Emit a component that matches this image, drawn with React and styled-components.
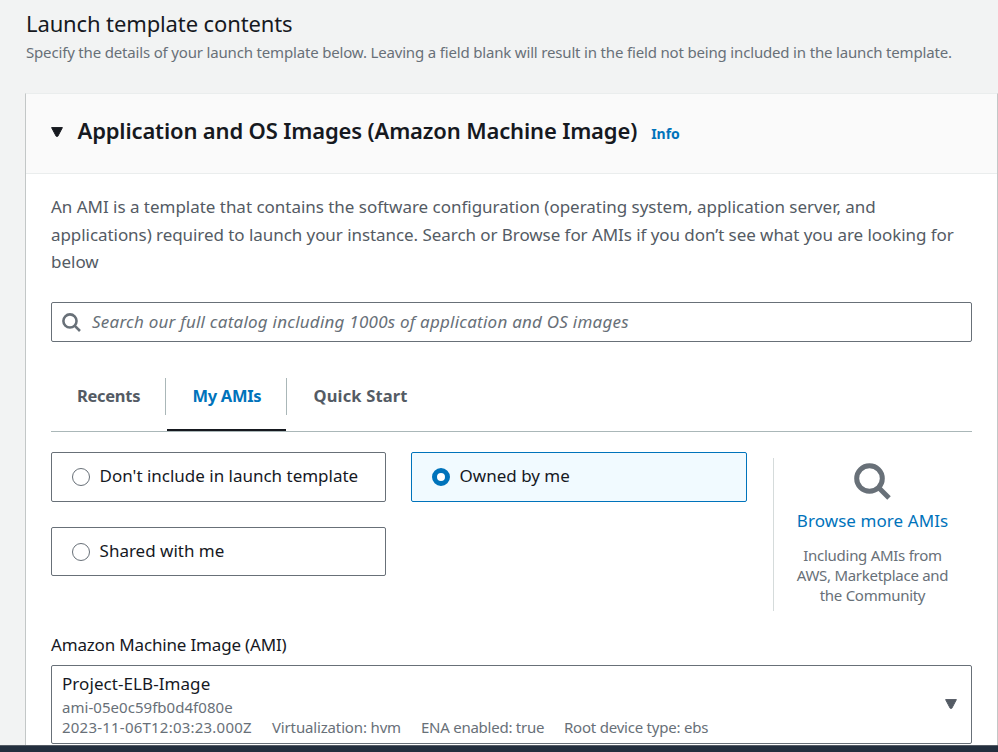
import React from "react";
import styled, { createGlobalStyle } from "styled-components";

const GlobalStyle = createGlobalStyle`
  * { box-sizing: border-box; }
  body {
    margin: 0;
    overflow: hidden;
    background: #f2f3f3;
    color: #16191f;
    font-family: "Noto Sans", "Open Sans", sans-serif;
  }
`;

const Page = styled.div`
  display: flex;
  flex-direction: column;
  width: 998px;
  height: 752px;
  overflow: hidden;
`;

const PageHeader = styled.header`
  height: 93px;
  flex: none;
  padding: 8px 26px 0;
`;

const Title = styled.h1`
  margin: 0;
  font-size: 22px;
  font-weight: 400;
  line-height: 30px;
  letter-spacing: -0.12px;
  white-space: nowrap;
`;

const Subtitle = styled.p`
  margin: 4px 0 0;
  font-size: 15px;
  line-height: 20px;
  letter-spacing: -0.17px;
  color: #687078;
  white-space: nowrap;
`;

const Card = styled.section`
  flex: 1;
  margin-left: 25px;
  background: #fff;
  border-top: 1px solid #eaeded;
  border-left: 1px solid #c3c7c7;
  border-right: 1px solid #c3c7c7;
`;

const CardHeader = styled.div`
  display: flex;
  align-items: baseline;
  height: 80px;
  padding: 21px 25px 0;
  background: #fafafa;
  border-bottom: 1px solid #eaeded;
`;

const CardTitle = styled.h2`
  margin: 0 0 0 14.5px;
  font-size: 22px;
  font-weight: 600;
  line-height: 30px;
  letter-spacing: -0.155px;
  white-space: nowrap;
`;

const InfoLink = styled.a`
  margin-left: 14px;
  font-size: 14px;
  font-weight: 700;
  color: #0073bb;
`;

const CardBody = styled.div`
  padding: 19px 25px 0;
`;

const Description = styled.p`
  margin: 0;
  color: #545b64;
  font-size: 17px;
  line-height: 27.5px;
  white-space: nowrap;
`;

const Line = styled.span`
  display: block;
  letter-spacing: ${(p) => p.$spacing}px;
`;

const SearchBox = styled.div`
  display: flex;
  align-items: center;
  height: 40px;
  margin-top: 26.5px;
  padding-left: 10px;
  border: 1px solid #687078;
  border-radius: 2px;
`;

const Placeholder = styled.span`
  margin: -1px 0 0 11px;
  font-size: 17px;
  font-style: italic;
  line-height: 24px;
  letter-spacing: 0.23px;
  color: #687078;
  white-space: nowrap;
`;

const Tabs = styled.nav`
  display: flex;
  height: 54px;
  margin-top: 36px;
  border-bottom: 1px solid #aab7b8;
`;

const Tab = styled.div`
  display: flex;
  flex-direction: column;
  justify-content: space-between;
  width: ${(p) => p.$width}px;
  color: ${(p) => (p.$active ? "#0073bb" : "#545b64")};

  &::after {
    content: "";
    height: 2px;
    margin: 0 1px;
    background: ${(p) => (p.$active ? "#16191f" : "transparent")};
  }
`;

const TabLabel = styled.span`
  height: 37px;
  padding-left: ${(p) => p.$inset}px;
  border-right: 1px solid ${(p) => (p.$last ? "transparent" : "#aab7b8")};
  font-size: 16.5px;
  font-weight: 700;
  line-height: 35px;
  letter-spacing: ${(p) => p.$spacing}px;
  white-space: nowrap;
`;

const Choices = styled.div`
  display: flex;
  margin-top: 20px;
`;

const Options = styled.div`
  display: grid;
  grid-template-columns: 335px 336px;
  grid-template-rows: 50px 49px;
  gap: 25px;
`;

const Option = styled.label`
  display: flex;
  align-items: center;
  padding-left: 20px;
  background: ${(p) => (p.$checked ? "#f1faff" : "#fff")};
  border: 1px solid ${(p) => (p.$checked ? "#0073bb" : "#687078")};
  border-radius: 2px;
`;

const Radio = styled.span`
  width: 18px;
  height: 18px;
  flex: none;
  border: ${(p) => (p.$checked ? "5px solid #0073bb" : "1.5px solid #687078")};
  border-radius: 50%;
  background: #fff;
`;

const OptionText = styled.span`
  margin: -2px 0 0 9.6px;
  font-size: 17px;
  line-height: 24px;
  letter-spacing: -0.01px;
  white-space: nowrap;
`;

const Browse = styled.aside`
  display: flex;
  flex-direction: column;
  align-items: center;
  width: 198px;
  height: 153px;
  margin: 6px 0 0 26px;
  padding-top: 5px;
  border-left: 1px solid #d5dbdb;
`;

const BrowseLink = styled.a`
  margin-top: 9px;
  font-size: 17px;
  line-height: 24px;
  letter-spacing: 0.07px;
  color: #0073bb;
  white-space: nowrap;
`;

const BrowseNote = styled.p`
  margin: 12px 0 0;
  font-size: 15px;
  line-height: 20px;
  letter-spacing: -0.28px;
  text-align: center;
  color: #687078;
  white-space: nowrap;
`;

const FieldLabel = styled.div`
  margin-top: 22px;
  font-size: 17px;
  line-height: 24px;
  letter-spacing: -0.17px;
`;

const Select = styled.div`
  display: flex;
  align-items: center;
  justify-content: space-between;
  height: 79px;
  margin-top: 8px;
  padding: 0 14px 0 10px;
  border: 1px solid #687078;
  border-radius: 2px;
`;

const SelectName = styled.div`
  padding-bottom: 1px;
  font-size: 17px;
  line-height: 24px;
  letter-spacing: 0.07px;
`;

const SelectMeta = styled.div`
  display: flex;
  font-size: 15px;
  line-height: 20px;
  color: #687078;
  white-space: nowrap;
`;

const MetaItem = styled.span`
  width: ${(p) => p.$width}px;
  letter-spacing: ${(p) => p.$spacing}px;
`;

const FooterBar = styled.footer`
  height: 7px;
  flex: none;
  background: #232f3e;
  border-top: 1px solid #545b64;
`;

const Icon = styled.svg`
  flex: none;
  align-self: ${(p) => p.$align || "center"};
  margin-top: ${(p) => p.$top || 0}px;
`;

const SearchIcon = ({ size, stroke }) => (
  <Icon width={size} height={size} viewBox="0 0 37 37" fill="none" stroke="#687078" strokeWidth={stroke}>
    <circle cx="15.5" cy="15.5" r="12.8" />
    <path d="M24.5 24.5L35 35" />
  </Icon>
);

const Caret = ({ color, align, top }) => (
  <Icon width="12" height="10" viewBox="0 0 12 10" $align={align} $top={top}>
    <path d="M.6 .6H11.4L6.8 9.3H5.2Z" fill={color} stroke={color} strokeLinejoin="round" />
  </Icon>
);

const tabs = [
  { label: "Recents", width: 115, inset: 26, spacing: -0.3 },
  { label: "My AMIs", width: 121, inset: 26.5, spacing: -0.3, active: true },
  { label: "Quick Start", width: 150, inset: 26.5, spacing: 0.16, last: true },
];

const options = [
  { label: "Don't include in launch template" },
  { label: "Owned by me", checked: true },
  { label: "Shared with me" },
];

export default function App() {
  return (
    <Page>
      <GlobalStyle />
      <PageHeader>
        <Title>Launch template contents</Title>
        <Subtitle>
          Specify the details of your launch template below. Leaving a field blank will result in the field not being
          included in the launch template.
        </Subtitle>
      </PageHeader>
      <Card>
        <CardHeader>
          <Caret color="#16191f" align="flex-start" top={12} />
          <CardTitle>Application and OS Images (Amazon Machine Image)</CardTitle>
          <InfoLink>Info</InfoLink>
        </CardHeader>
        <CardBody>
          <Description>
            <Line $spacing={-0.025}>
              An AMI is a template that contains the software configuration (operating system, application server, and
            </Line>
            <Line $spacing={-0.06}>
              applications) required to launch your instance. Search or Browse for AMIs if you don’t see what you are
              looking for
            </Line>
            <Line $spacing={0}>below</Line>
          </Description>
          <SearchBox>
            <SearchIcon size={19} stroke={5} />
            <Placeholder>Search our full catalog including 1000s of application and OS images</Placeholder>
          </SearchBox>
          <Tabs>
            {tabs.map((t) => (
              <Tab key={t.label} $width={t.width} $active={t.active}>
                <TabLabel $inset={t.inset} $spacing={t.spacing} $last={t.last}>
                  {t.label}
                </TabLabel>
              </Tab>
            ))}
          </Tabs>
          <Choices>
            <Options>
              {options.map((o) => (
                <Option key={o.label} $checked={o.checked}>
                  <Radio $checked={o.checked} />
                  <OptionText>{o.label}</OptionText>
                </Option>
              ))}
            </Options>
            <Browse>
              <SearchIcon size={37} stroke={5} />
              <BrowseLink>Browse more AMIs</BrowseLink>
              <BrowseNote>
                Including AMIs from
                <br />
                AWS, Marketplace and
                <br />
                the Community
              </BrowseNote>
            </Browse>
          </Choices>
          <FieldLabel>Amazon Machine Image (AMI)</FieldLabel>
          <Select>
            <div>
              <SelectName>Project-ELB-Image</SelectName>
              <SelectMeta>
                <MetaItem $spacing={0.04}>ami-05e0c59fb0d4f080e</MetaItem>
              </SelectMeta>
              <SelectMeta>
                <MetaItem $width={210} $spacing={0.22}>2023-11-06T12:03:23.000Z</MetaItem>
                <MetaItem $width={149} $spacing={-0.15}>Virtualization: hvm</MetaItem>
                <MetaItem $width={143} $spacing={-0.25}>ENA enabled: true</MetaItem>
                <MetaItem $spacing={-0.22}>Root device type: ebs</MetaItem>
              </SelectMeta>
            </div>
            <Caret color="#545b64" top={-1} />
          </Select>
        </CardBody>
      </Card>
      <FooterBar />
    </Page>
  );
}
